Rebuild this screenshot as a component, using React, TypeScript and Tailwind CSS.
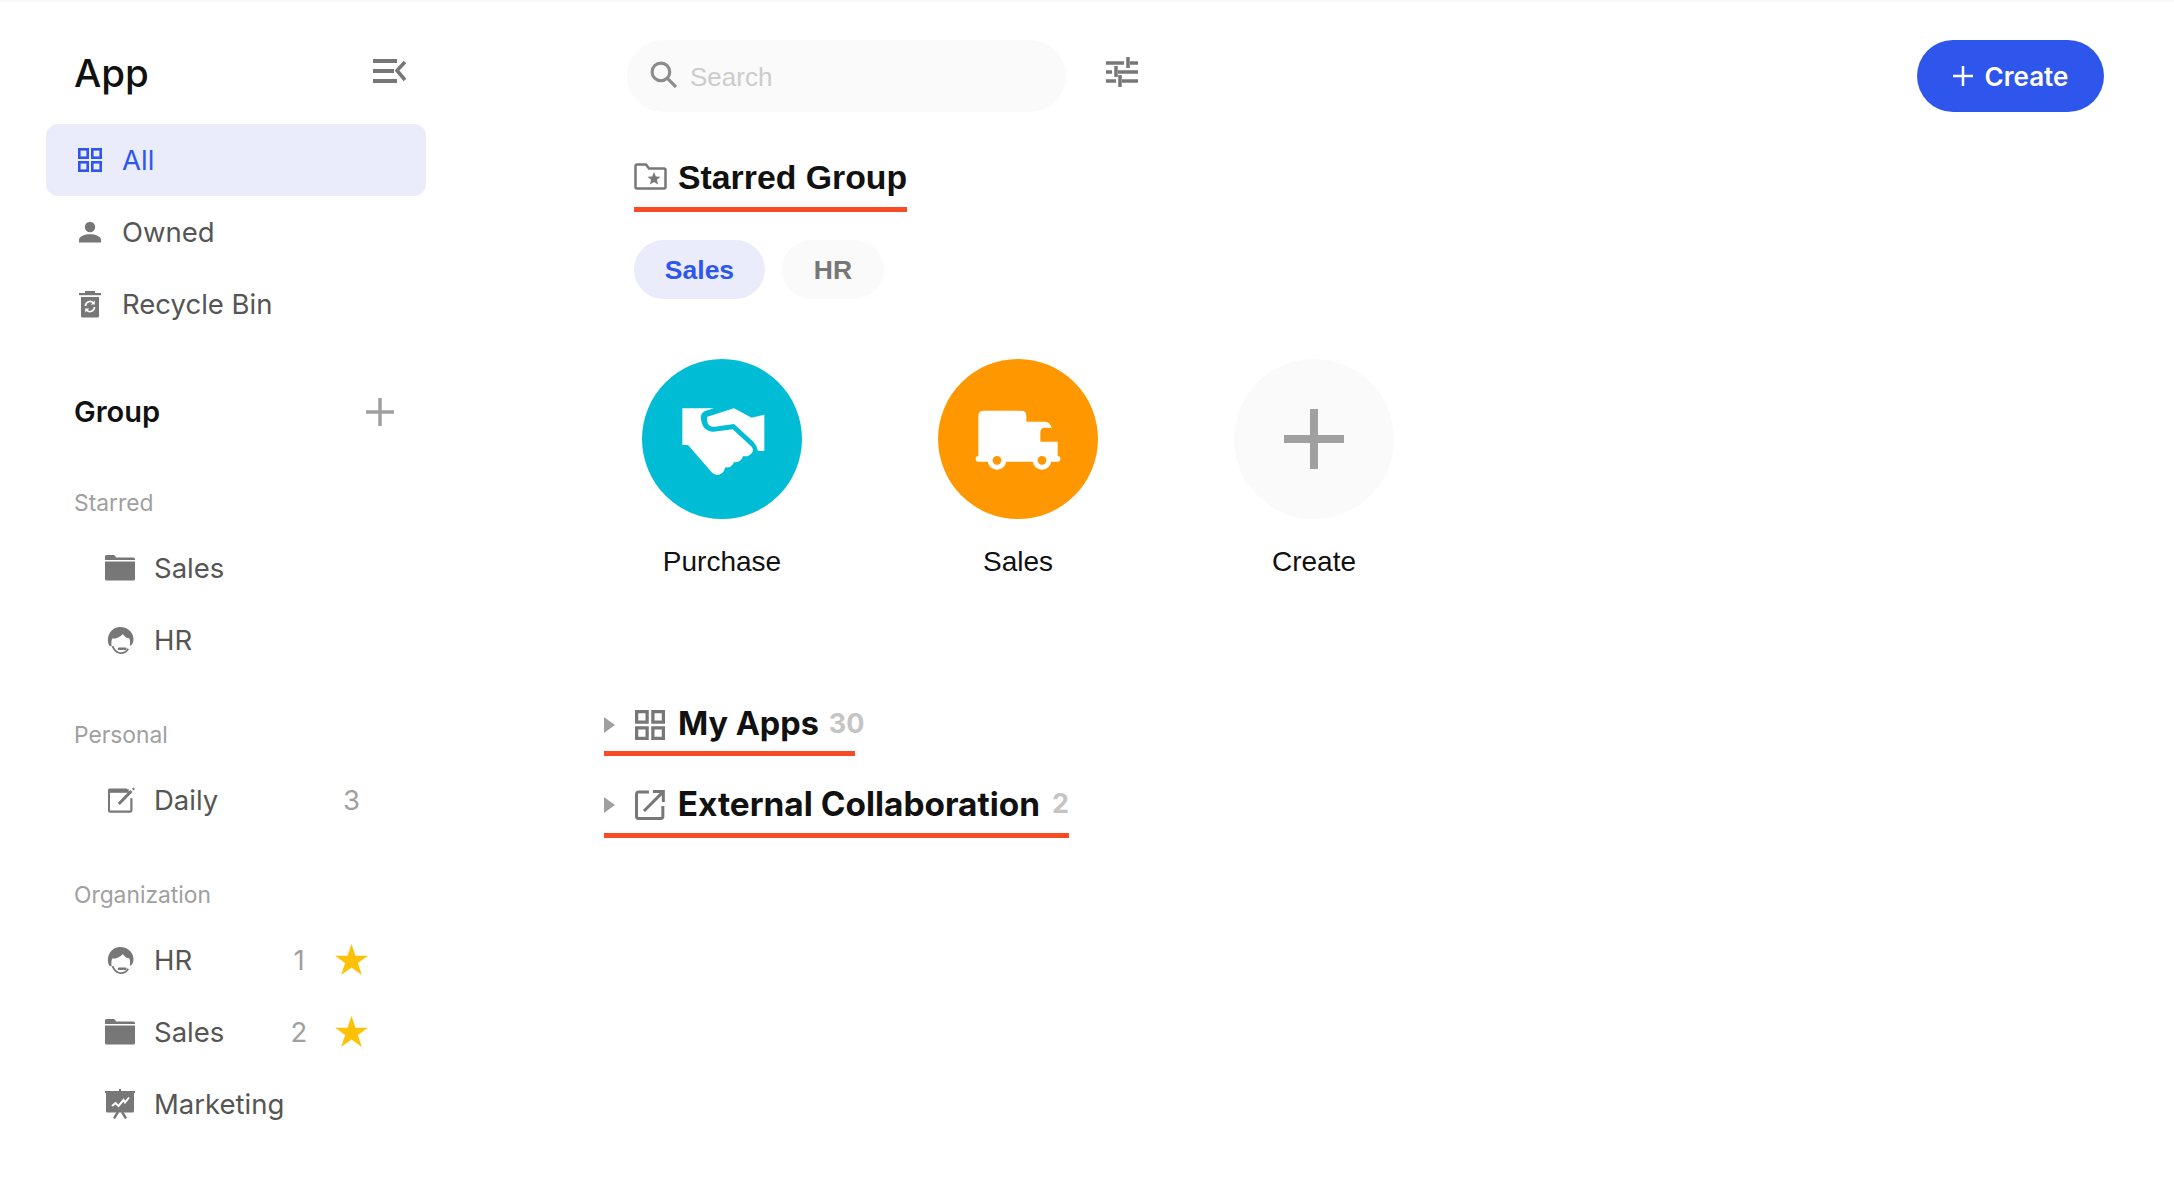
import React from 'react';

const GridIcon = ({ className }: { className: string }) => (
  <svg viewBox="0 0 24 24" className={className} fill="none" stroke="currentColor" strokeWidth="2.6">
    <rect x="1.3" y="1.3" width="8.4" height="8.4" />
    <rect x="14.3" y="1.3" width="8.4" height="8.4" />
    <rect x="1.3" y="14.3" width="8.4" height="8.4" />
    <rect x="14.3" y="14.3" width="8.4" height="8.4" />
  </svg>
);

const PersonIcon = () => (
  <svg viewBox="0 0 24 24" className="w-6 h-6 text-[#777777]" fill="currentColor">
    <circle cx="12" cy="7" r="5.2" />
    <path d="M1 22.500v-2.600c0-3.600 6-5.600 11-5.600s11 2 11 5.600v2.600z" />
  </svg>
);

const BinIcon = () => (
  <svg viewBox="0 0 24 28" className="w-6 h-7 text-[#777777]" fill="currentColor">
    <rect x="1" y="3" width="22" height="2.200" />
    <rect x="7" y="1" width="10" height="2" />
    <path d="M3 7h18v19a1.500 1.500 0 0 1-1.500 1.500h-15A1.500 1.500 0 0 1 3 26z" />
    <path d="M7.500 16a4.600 4.600 0 0 1 8-3M16.500 17a4.600 4.600 0 0 1-8 3" fill="none" stroke="#fff" strokeWidth="1.700" />
    <path d="M16.800 10.500v4h-4zM7.200 22.500v-4h4z" fill="#fff" />
  </svg>
);

const FolderIcon = () => (
  <svg viewBox="0 0 30 26" className="w-[30px] h-[26px] text-[#777777]" fill="currentColor">
    <path d="M0 1.500A1.500 1.500 0 0 1 1.500 0h7a2 2 0 0 1 1.600.8L11 2.500h17.500A1.500 1.500 0 0 1 30 4v1H0z" />
    <path d="M0 6.500h30v17.500a1.500 1.500 0 0 1-1.500 1.500h-27A1.500 1.500 0 0 1 0 24z" />
  </svg>
);

const HeadIcon = () => (
  <svg viewBox="0 0 30 30" className="w-[30px] h-[30px] text-[#777777] ml-[2px]" fill="currentColor">
    <path d="M14 1C7 1 1.500 6.500 1 14c-.1 2.500.3 5 1.300 6.800L5 22c-.6-3-.4-6.500.6-8.500 4 .2 8.500-1.500 11.400-5 1.600 2.800 4.400 4.500 7 5 .8 2.500.8 5.500.4 8l2.600-2c1-2 1.500-4 1.300-6.500C27.800 6 21.500 1 14 1z" />
    <path d="M5 21.500C6.500 26.500 10.500 30 15 30c3.500 0 6.800-1.800 8.600-5.200l-1.700-1c-1.500 2.900-4 4.300-6.900 4.300-3.600 0-6.700-2.900-8-6.800z" />
    <rect x="11.500" y="23" width="9.500" height="2.800" rx="1.400" />
  </svg>
);

const EditIcon = () => (
  <svg viewBox="0 0 30 30" className="w-[30px] h-[30px] text-[#777777] ml-[3px]" fill="none" stroke="currentColor">
    <path d="M26 13v13.500a1.500 1.500 0 0 1-1.500 1.500h-22A1.500 1.500 0 0 1 1 26.500V5a1.500 1.500 0 0 1 1.500-1.500H21" strokeWidth="2.400" />
    <rect x="1" y="3" width="22" height="4" fill="currentColor" stroke="none" />
    <path d="M12 19.500L26 5" strokeWidth="3.400" />
    <path d="M27.500 3.500l1.500-1.500" strokeWidth="2.500" />
  </svg>
);

const ChartIcon = () => (
  <svg viewBox="0 0 30 30" className="w-[30px] h-[30px] text-[#777777]" fill="currentColor">
    <rect x="0" y="2" width="30" height="2" />
    <rect x="14" y="0" width="2" height="3" />
    <path d="M1 3h28v19a1.500 1.500 0 0 1-1.500 1.500h-25A1.500 1.500 0 0 1 1 22z" />
    <path d="M7 17l3.500-3 3 3 5-6 1.500 2.500 4-5" fill="none" stroke="#fff" strokeWidth="2" />
    <path d="M13 23l-4 6.500M17 23l4 6.500" stroke="currentColor" strokeWidth="2.400" fill="none" />
  </svg>
);

const StarIcon = () => (
  <svg viewBox="0 0 33 31" className="w-[33px] h-[31px] text-[#ffc107] -mt-[3px]" fill="currentColor">
    <path d="M16.500 0l4 11.800H33l-10.100 7.300 3.900 11.900-10.300-7.400L6.200 31l3.900-11.900L0 11.800h12.500z" />
  </svg>
);

const PlusIcon = ({ className }: { className: string }) => (
  <svg viewBox="0 0 28 28" className={className} fill="none" stroke="currentColor" strokeWidth="3.500">
    <path d="M14 0v28M0 14h28" />
  </svg>
);

const Handshake = () => (
  <svg viewBox="66 57 480 480" className="w-[160px] h-[160px]" fill="#fff">
    <path d="M187 205H282L255 213Q240 220 243 238Q248 275 280 275L338 268L395 320Q402 330 396 338Q385 352 370 348Q360 370 342 366Q335 385 316 382Q310 405 290 405Q283 405 275 397L204 315H187Z" />
    <path d="M262 230L342 205L395 233L433 224V333H414Q412 318 400 305L342 252L285 260Q265 262 262 245Q260 235 262 230Z" />
  </svg>
);

const Truck = () => (
  <svg viewBox="54 57 480 480" className="w-[160px] h-[160px]" fill="#fff">
    <path d="M175 228Q175 212 192 212H304Q319 212 319 228V245H375Q390 245 395 263H375Q361 263 361 277V305H413V350H175Z" />
    <rect x="167" y="348" width="254" height="17" rx="8" />
    <circle cx="231" cy="361" r="28" />
    <circle cx="366" cy="361" r="28" />
    <circle cx="231" cy="361" r="13" fill="#ff9800" />
    <circle cx="366" cy="361" r="13" fill="#ff9800" />
  </svg>
);

const Triangle = () => (
  <svg viewBox="0 0 11 16" className="w-[11px] h-4 text-[#a0a0a0] shrink-0" fill="currentColor">
    <path d="M0 0l11 8-11 8z" />
  </svg>
);

function NavRow({ icon, label, active }: { icon: React.ReactNode; label: string; active?: boolean }) {
  return (
    <div
      className={`h-[72px] flex items-center gap-5 pl-8 rounded-xl text-[27.5px] ${
        active ? 'bg-[#eaecfb] text-[#2f56ec]' : 'text-[#555555]'
      }`}
    >
      <span className="w-6 flex justify-center">{icon}</span>
      <span className="pt-[2px]">{label}</span>
    </div>
  );
}

function GroupRow({ icon, label, count, star, lastCount }: { icon: React.ReactNode; label: string; count?: number; star?: boolean; lastCount?: number }) {
  return (
    <div className="h-[72px] flex items-center pl-[59px] pr-[58px] text-[27.5px] text-[#555555]">
      <span className="w-[30px] flex justify-center mr-[19px]">{icon}</span>
      <span className="flex-1 pt-[2px]">{label}</span>
      <span className="w-10 text-center text-[#a0a0a0] mr-4 pt-[2px]">{count}</span>
      <span className="w-[33px] flex justify-center text-[#a0a0a0] pt-[2px]">
        {star ? <StarIcon /> : lastCount}
      </span>
    </div>
  );
}

function SectionLabel({ children, className }: { children: string; className: string }) {
  return <div className={`h-10 flex items-center pl-7 pt-[2px] text-[22.8px] text-[#a0a0a0] ${className}`}>{children}</div>;
}

export default function App() {
  return (
    <div className="min-h-[1198px] bg-white flex font-['Inter',sans-serif] border-t-2 border-[#f8f8f8] -mb-[2px]">
      <aside className="w-[380px] ml-[46px] shrink-0">
        <div className="h-[122px] pt-[22px] flex items-center justify-between pl-7 pr-[19px]">
          <span className="text-[38.5px] font-medium text-[#111111]">App</span>
          <svg viewBox="0 0 34 24" className="w-[34px] h-6 text-[#777777] -mt-[6px]" fill="currentColor">
            <rect x="0" y="0" width="24" height="4" />
            <rect x="0" y="10" width="21" height="4" />
            <rect x="0" y="20" width="24" height="4" />
            <path d="M32 3L24 11.500 32 21" fill="none" stroke="currentColor" strokeWidth="3.500" />
          </svg>
        </div>
        <NavRow active icon={<GridIcon className="w-6 h-6" />} label="All" />
        <NavRow icon={<PersonIcon />} label="Owned" />
        <NavRow icon={<BinIcon />} label="Recycle Bin" />

        <div className="mt-9 h-[72px] flex items-center justify-between pl-7 pr-8">
          <span className="text-[29px] font-semibold text-[#111111]">Group</span>
          <PlusIcon className="w-7 h-7 text-[#a0a0a0]" />
        </div>

        <SectionLabel className="mt-[34px] mb-[10px]">Starred</SectionLabel>
        <GroupRow icon={<FolderIcon />} label="Sales" />
        <GroupRow icon={<HeadIcon />} label="HR" />

        <SectionLabel className="mt-[38px] mb-[10px]">Personal</SectionLabel>
        <GroupRow icon={<EditIcon />} label="Daily" lastCount={3} />

        <SectionLabel className="mt-[38px] mb-[10px]">Organization</SectionLabel>
        <GroupRow icon={<HeadIcon />} label="HR" count={1} star />
        <GroupRow icon={<FolderIcon />} label="Sales" count={2} star />
        <GroupRow icon={<ChartIcon />} label="Marketing" />
      </aside>

      <main className="flex-1 ml-[178px] mr-[70px] pt-[38px] font-['Liberation_Sans',sans-serif]">
        <div className="flex items-center h-[72px] pl-[23px]">
          <div className="w-[439px] h-[72px] rounded-full bg-[#fafafa] flex items-center pl-[23px] gap-[13px]">
            <svg viewBox="0 0 26 26" className="w-[27px] h-[27px] text-[#8c8c8c] -mt-1" fill="none" stroke="currentColor" strokeWidth="3">
              <circle cx="10.500" cy="10.500" r="8.500" />
              <path d="M16.500 16.500L25 25" />
            </svg>
            <span className="text-[26px] text-[#cccccc] pt-[2px]">Search</span>
          </div>
          <svg viewBox="0 0 32 32" className="w-8 h-8 ml-10 -mt-2 text-[#777777]" fill="none" stroke="currentColor" strokeWidth="3.500">
            <path d="M0 7h18M24 7h8M22 1v11M0 16h6M12 16h20M10 10v11M0 25h10M16 25h16M14 19v12" />
          </svg>
          <button className="ml-auto w-[187px] h-[72px] rounded-full bg-[#2f56ec] text-white flex items-center justify-center gap-3 text-[26px] font-semibold font-['Inter',sans-serif]">
            <PlusIcon className="w-5 h-5" />
            Create
          </button>
        </div>

        <div className="pl-[30px]">
          <div className="mt-[38px] inline-flex items-center gap-[11px] h-[62px] pb-[2px] border-b-[5px] border-[#f74a25]">
            <svg viewBox="0 0 33 27" className="w-[33px] h-[27px] text-[#777777] -mt-[2px]" fill="none" stroke="currentColor" strokeWidth="2.500">
              <path d="M1.500 3A1.500 1.500 0 0 1 3 1.500h9l3 4h15A1.500 1.500 0 0 1 31.500 7v17A1.500 1.500 0 0 1 30 25.500H3A1.500 1.500 0 0 1 1.500 24z" />
              <path d="M20 9l1.800 4.500 4.700.3-3.600 3 1.200 4.700-4.100-2.600-4.100 2.600 1.200-4.700-3.600-3 4.700-.3z" fill="currentColor" stroke="none" />
            </svg>
            <span className="text-[33.8px] font-bold text-[#111111]">Starred Group</span>
          </div>

          <div className="mt-7 flex gap-[17px] text-[26.5px] font-bold">
            <span className="w-[131px] h-[59px] pt-[2px] rounded-full bg-[#eaecfb] text-[#2f56ec] flex items-center justify-center">Sales</span>
            <span className="w-[102px] h-[59px] pt-[2px] rounded-full bg-[#fafafa] text-[#777777] flex items-center justify-center">HR</span>
          </div>

          <div className="mt-[60px] ml-2 flex gap-[136px]">
            <div className="w-40 flex flex-col items-center">
              <div className="w-40 h-40 rounded-full bg-[#00bcd4]"><Handshake /></div>
              <span className="mt-[26px] h-[34px] leading-[34px] text-[28px] text-[#111111] whitespace-nowrap">Purchase</span>
            </div>
            <div className="w-40 flex flex-col items-center">
              <div className="w-40 h-40 rounded-full bg-[#ff9800]"><Truck /></div>
              <span className="mt-[26px] h-[34px] leading-[34px] text-[28px] text-[#111111] whitespace-nowrap">Sales</span>
            </div>
            <div className="w-40 flex flex-col items-center">
              <div className="w-40 h-40 rounded-full bg-[#fafafa] flex items-center justify-center">
                <svg viewBox="0 0 60 60" className="w-[60px] h-[60px] text-[#a0a0a0]" fill="currentColor">
                  <path d="M26 0h8v26h26v8H34v26h-8V34H0v-8h26z" />
                </svg>
              </div>
              <span className="mt-[26px] h-[34px] leading-[34px] text-[28px] text-[#111111] whitespace-nowrap">Create</span>
            </div>
          </div>
        </div>

        <div className="mt-[122px] flex flex-col items-start font-['Inter',sans-serif]">
          <div className="h-[55px] w-[251px] pb-[3px] border-b-[5px] border-[#f74a25] flex items-center">
            <Triangle />
            <span className="ml-5 text-[#777777]"><GridIcon className="w-[30px] h-[30px] block" /></span>
            <span className="ml-[13px] text-[32.4px] font-bold text-[#111111] whitespace-nowrap">My Apps</span>
            <span className="ml-[10px] text-[27px] font-bold text-[#c4c4c4]">30</span>
          </div>
          <div className="mt-[24px] h-[58px] w-[465px] pb-[4px] border-b-[5px] border-[#f74a25] flex items-center">
            <Triangle />
            <svg viewBox="0 0 30 30" className="ml-5 w-[30px] h-[30px] text-[#777777]" fill="none" stroke="currentColor" strokeWidth="3">
              <path d="M14 2H3.500A2 2 0 0 0 1.500 4v22.500a2 2 0 0 0 2 2H26a2 2 0 0 0 2-2V16" />
              <path d="M9 21L28 2M18 1.500h10.500V12" />
            </svg>
            <span className="ml-[13px] text-[33.4px] font-bold text-[#111111] whitespace-nowrap">External Collaboration</span>
            <span className="ml-3 text-[27px] font-bold text-[#c4c4c4]">2</span>
          </div>
        </div>
      </main>
    </div>
  );
}
